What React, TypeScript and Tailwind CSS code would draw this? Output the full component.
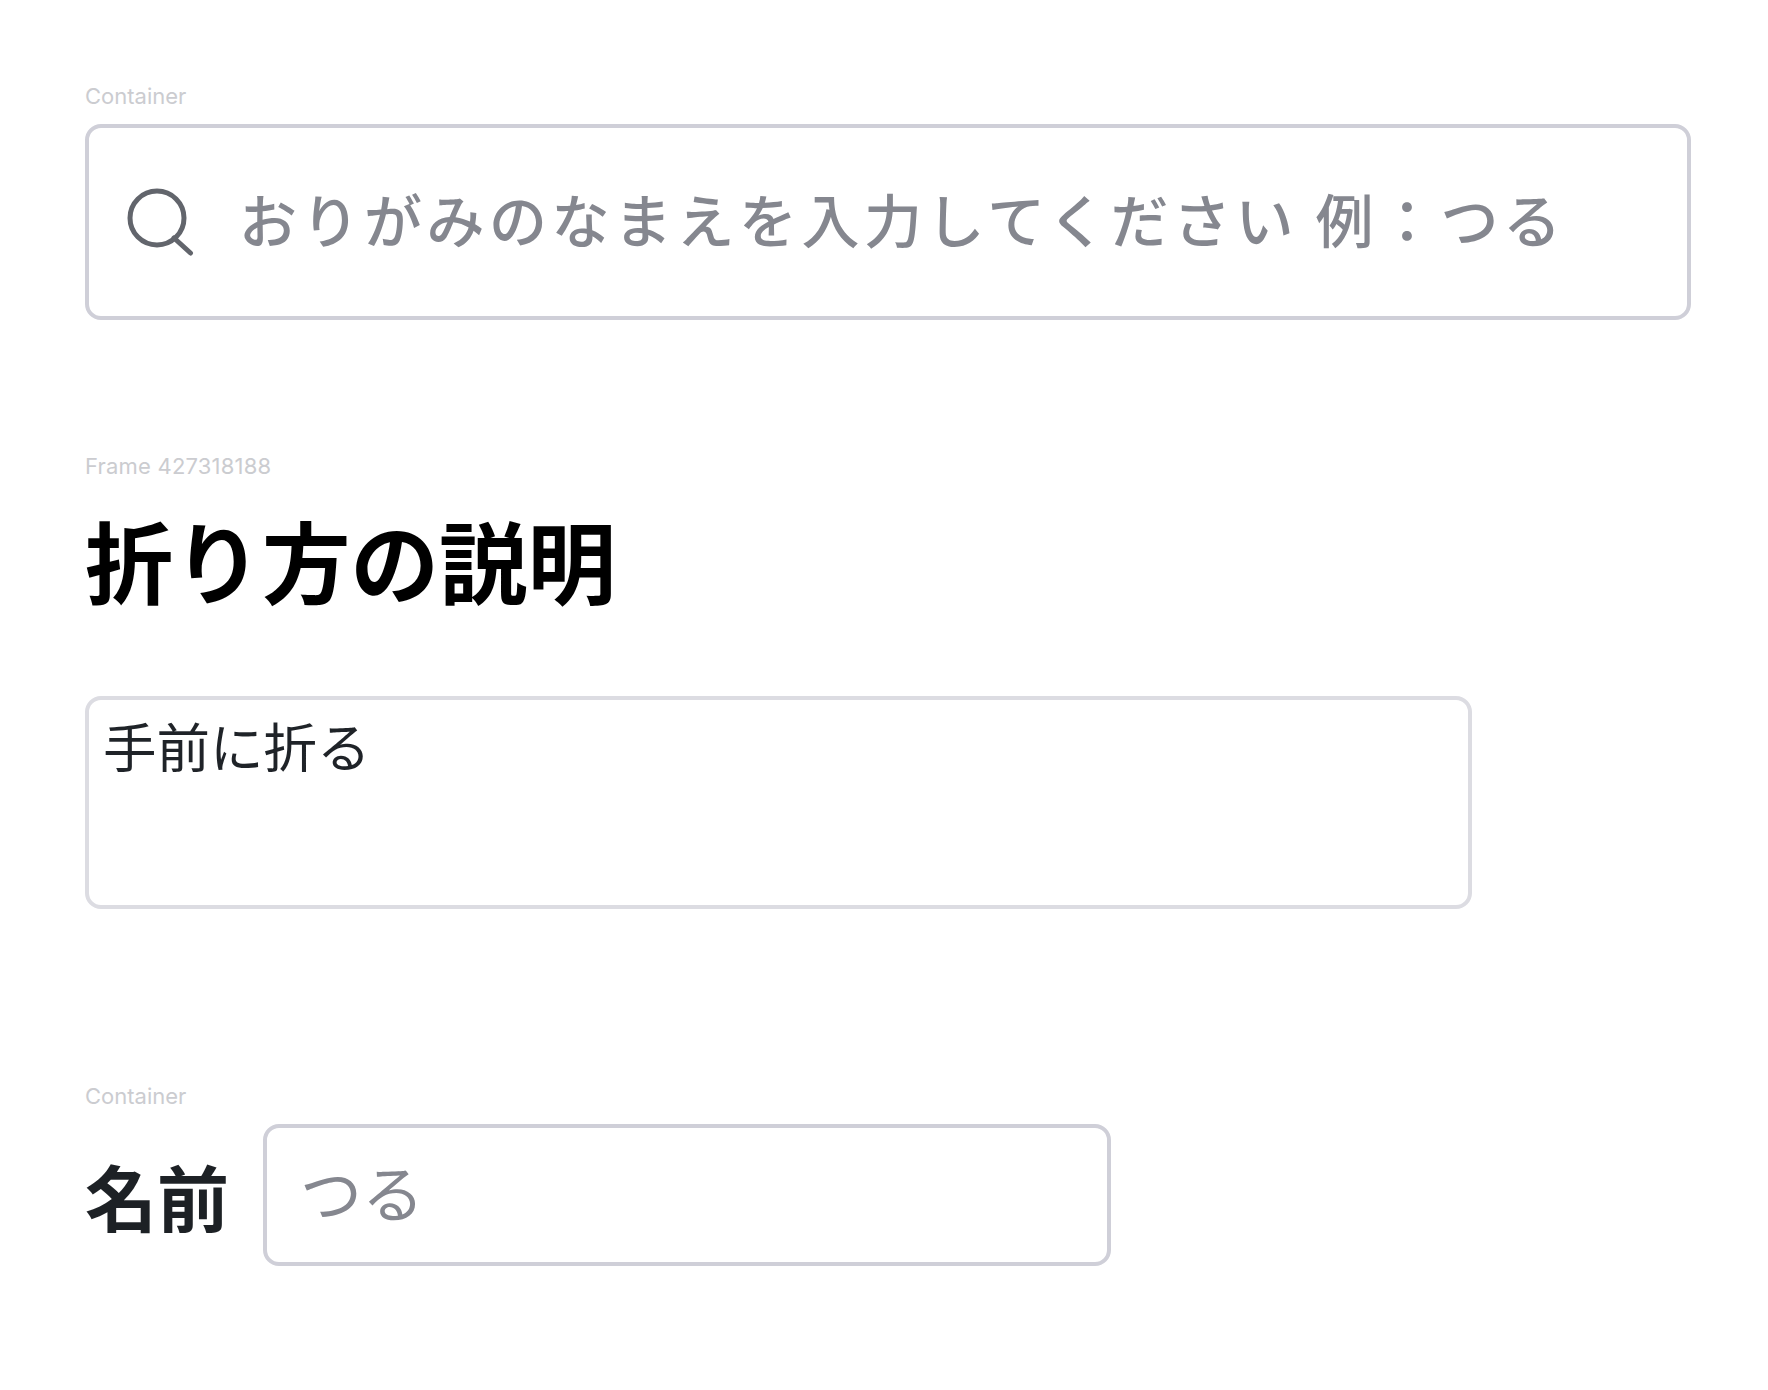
import React from 'react';

const jp = "font-['Noto_Sans_CJK_JP',sans-serif]";

function FrameLabel({ children, className = '' }: { children: React.ReactNode; className?: string }) {
  return (
    <div className={`h-7 font-['Inter',sans-serif] text-[22px] leading-7 text-[#cbccd0] ${className}`}>{children}</div>
  );
}

function SearchIcon() {
  return (
    <svg width="68" height="68" viewBox="0 0 68 68" fill="none" className="shrink-0">
      <circle cx="30" cy="30" r="27" stroke="#62656c" strokeWidth="5" />
      <path d="M47 50L63.5 65" stroke="#62656c" strokeWidth="5" strokeLinecap="round" />
    </svg>
  );
}

export default function App() {
  return (
    <div className="flex h-[1390px] w-[1768px] flex-col bg-white pl-[85px] pt-[82px]">
      {/* Search box */}
      <FrameLabel>Container</FrameLabel>
      <div className="mt-3.5 flex h-[196px] w-[1606px] items-center rounded-2xl border-4 border-[#cfcfd8] pl-[38px]">
        <SearchIcon />
        <span className={`${jp} mb-[9px] ml-[44px] whitespace-pre text-[58px] font-medium leading-none tracking-[4.5px] text-[#85878f]`}>
          おりがみのなまえを入力してください 例：つる
        </span>
      </div>

      {/* Description */}
      <FrameLabel className="mt-[132px] tracking-[0.2px]">Frame 427318188</FrameLabel>
      <h2 className={`${jp} mt-[28px] text-[88.5px] font-bold leading-[100px] text-black`}>折り方の説明</h2>
      <div className="mt-[88px] h-[213px] w-[1387px] rounded-2xl border-4 border-[#dcdce2] pl-[14px] pt-[13px]">
        <span className={`${jp} text-[53.5px] leading-[64px] text-[#1f2328]`}>手前に折る</span>
      </div>

      {/* Name field */}
      <FrameLabel className="mt-[173px]">Container</FrameLabel>
      <div className="mt-3.5 flex items-center">
        <span className={`${jp} w-[178px] text-[72px] font-bold leading-none text-[#1d2125]`}>名前</span>
        <div className="flex h-[142px] w-[848px] items-center rounded-2xl border-4 border-[#cfcfd8] pl-[33px]">
          <span className={`${jp} mb-[9px] text-[62px] leading-none text-[#85878f]`}>つる</span>
        </div>
      </div>
    </div>
  );
}
